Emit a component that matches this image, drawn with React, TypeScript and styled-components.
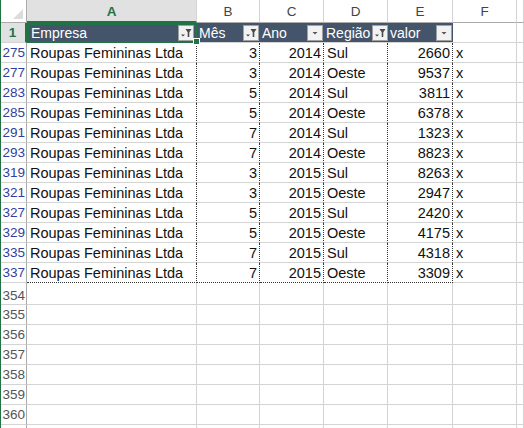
import React from "react";
import styled, { createGlobalStyle } from "styled-components";

const Global = createGlobalStyle`
  html, body { margin: 0; padding: 0; background: #fff; }
  body { font-family: "Liberation Sans", Arial, sans-serif; }
`;

const COLS = "26px 170px 63px 64px 64px 65px 64px 1fr";

const Sheet = styled.div`
  width: 524px;
  height: 428px;
  overflow: hidden;
  background: #fff;
  display: flex;
  flex-direction: column;
  border-left: 1px solid #217346;
  box-sizing: border-box;
`;

const Row = styled.div<{ $h?: number }>`
  display: grid;
  grid-template-columns: ${COLS};
  height: ${(p) => p.$h ?? 20}px;
  flex: none;
`;

const ColHead = styled.div<{ $sel?: boolean }>`
  box-sizing: border-box;
  border-right: 1px solid #d4d4d4;
  border-bottom: ${(p) => (p.$sel ? "2px solid #217346" : "1px solid #ababab")};
  background: ${(p) => (p.$sel ? "#e1e1e1" : "#fff")};
  color: ${(p) => (p.$sel ? "#217346" : "#444")};
  font-weight: ${(p) => (p.$sel ? 700 : 400)};
  font-size: 13.5px;
  display: flex;
  align-items: center;
  justify-content: center;
  padding-top: 1px;
`;

const Corner = styled.div`
  box-sizing: border-box;
  border-right: 1px solid #ababab;
  border-bottom: 1px solid #ababab;
  position: relative;
  &::after {
    content: "";
    position: absolute;
    right: 3px;
    bottom: 3px;
    width: 0;
    height: 0;
    border-left: 10px solid transparent;
    border-bottom: 10px solid #dcdcdc;
  }
`;

const RowHead = styled.div<{ $kind: "sel" | "blue" | "plain"; $gap?: boolean }>`
  box-sizing: border-box;
  border-right: ${(p) => (p.$kind === "sel" ? "2px solid #217346" : "1px solid #ababab")};
  border-bottom: 1px solid #d4d4d4;
  background: ${(p) => (p.$kind === "sel" ? "#e1e1e1" : "#fff")};
  color: ${(p) =>
    p.$kind === "sel" ? "#217346" : p.$kind === "blue" ? "#2e3fa0" : "#555"};
  font-weight: ${(p) => (p.$kind === "sel" ? 700 : 400)};
  font-size: 13.5px;
  display: flex;
  align-items: center;
  justify-content: ${(p) => (p.$kind === "sel" ? "center" : "flex-end")};
  padding-right: 1px;
  padding-top: ${(p) => (p.$gap ? 3 : 0)}px;
`;

const Cell = styled.div<{ $align?: "left" | "right"; $dotR?: boolean; $dotB?: boolean }>`
  box-sizing: border-box;
  border-right: ${(p) => (p.$dotR ? "1px dotted #333" : "1px solid #d4d4d4")};
  border-bottom: ${(p) => (p.$dotB ? "1px dotted #333" : "1px solid #d4d4d4")};
  font-size: 14.5px;
  color: #111;
  display: flex;
  align-items: center;
  justify-content: ${(p) => (p.$align === "right" ? "flex-end" : "flex-start")};
  padding: 1px 2px 0 3px;
  white-space: nowrap;
  overflow: hidden;
`;

const HeadCell = styled.div<{ $active?: boolean }>`
  box-sizing: border-box;
  background: #44546a;
  color: #fff;
  font-size: 14px;
  display: flex;
  align-items: center;
  justify-content: space-between;
  gap: 2px;
  padding: 1px 1px 0 2px;
  border-bottom: 1px solid #d4d4d4;
  position: relative;
  white-space: nowrap;
  ${(p) =>
    p.$active
      ? `outline: 2px solid #217346; outline-offset: -2px; padding-left: 4px; padding-right: 3px;`
      : ""}
`;

const Handle = styled.span`
  position: absolute;
  right: -3px;
  bottom: -3px;
  width: 5px;
  height: 5px;
  background: #217346;
  border: 1px solid #fff;
  z-index: 2;
`;

const FilterBtn = styled.span`
  width: 16px;
  height: 16px;
  box-sizing: border-box;
  background: #f2f2f2;
  border: 1px solid #a0a0a0;
  display: flex;
  align-items: center;
  justify-content: center;
  flex: none;
`;

const Blank = styled.div`
  box-sizing: border-box;
  border-right: 1px solid #d4d4d4;
  border-bottom: 1px solid #d4d4d4;
`;

function FilterIcon({ filtered }: { filtered: boolean }) {
  return (
    <FilterBtn>
      <svg width="14" height="14" viewBox="0 0 14 14">
        {filtered ? (
          <>
            <path d="M2 8.5 L6 8.5 L4 10.5 Z" fill="#4a4a4a" />
            <path d="M6.5 3 L12.5 3 L10.3 6.2 L10.3 11 L8.7 11 L8.7 6.2 Z" fill="#4a4a4a" />
          </>
        ) : (
          <path d="M4.5 6 L9.5 6 L7 8.5 Z" fill="#555" />
        )}
      </svg>
    </FilterBtn>
  );
}

const data: [number, number, number, string, number][] = [
  [275, 3, 2014, "Sul", 2660],
  [277, 3, 2014, "Oeste", 9537],
  [283, 5, 2014, "Sul", 3811],
  [285, 5, 2014, "Oeste", 6378],
  [291, 7, 2014, "Sul", 1323],
  [293, 7, 2014, "Oeste", 8823],
  [319, 3, 2015, "Sul", 8263],
  [321, 3, 2015, "Oeste", 2947],
  [327, 5, 2015, "Sul", 2420],
  [329, 5, 2015, "Oeste", 4175],
  [335, 7, 2015, "Sul", 4318],
  [337, 7, 2015, "Oeste", 3309],
];

const headers: [string, boolean][] = [
  ["Empresa", true],
  ["Mês", true],
  ["Ano", false],
  ["Região", true],
  ["valor", false],
];

export default function App() {
  return (
    <>
      <Global />
      <Sheet>
        <Row $h={23}>
          <Corner />
          <ColHead $sel>A</ColHead>
          <ColHead>B</ColHead>
          <ColHead>C</ColHead>
          <ColHead>D</ColHead>
          <ColHead>E</ColHead>
          <ColHead>F</ColHead>
          <ColHead />
        </Row>
        <Row>
          <RowHead $kind="sel">1</RowHead>
          {headers.map(([h, f], i) => (
            <HeadCell key={h} $active={i === 0}>
              <span>{h}</span>
              <FilterIcon filtered={f} />
              {i === 0 && <Handle />}
            </HeadCell>
          ))}
          <Blank />
          <Blank />
        </Row>
        {data.map(([n, m, y, r, v], i) => {
          const last = i === data.length - 1;
          return (
            <Row key={n}>
              <RowHead $kind="blue">{n}</RowHead>
              <Cell $dotR $dotB={last}>Roupas Femininas Ltda</Cell>
              <Cell $align="right" $dotR $dotB={last}>{m}</Cell>
              <Cell $align="right" $dotR $dotB={last}>{y}</Cell>
              <Cell $dotR $dotB={last}>{r}</Cell>
              <Cell $align="right" $dotR $dotB={last}>{v}</Cell>
              <Cell>x</Cell>
              <Blank />
            </Row>
          );
        })}
        {[354, 355, 356, 357, 358, 359, 360].map((n, i) => (
          <Row key={n} $h={i === 0 ? 22 : 20}>
            <RowHead $kind="plain" $gap={i === 0}>{n}</RowHead>
            <Blank />
            <Blank />
            <Blank />
            <Blank />
            <Blank />
            <Blank />
            <Blank />
          </Row>
        ))}
        <Row $h={20}>
          <RowHead $kind="plain" />
          <Blank />
          <Blank />
          <Blank />
          <Blank />
          <Blank />
          <Blank />
          <Blank />
        </Row>
      </Sheet>
    </>
  );
}
